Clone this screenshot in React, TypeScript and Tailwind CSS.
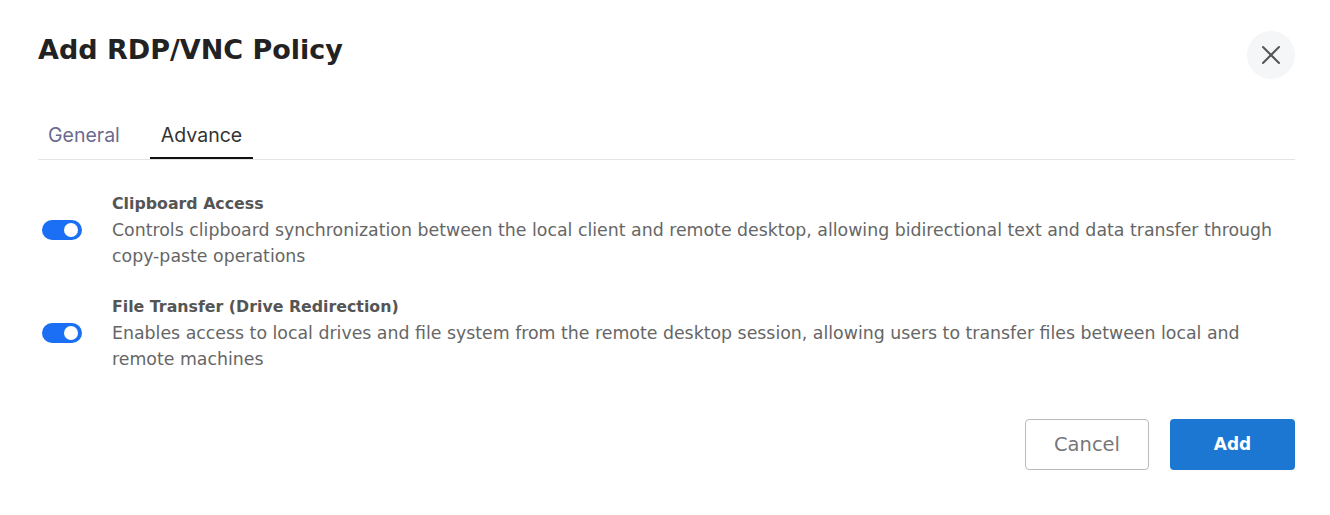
import { X } from 'lucide-react';

function Toggle() {
  return (
    <div className="flex h-5 w-10 shrink-0 items-center justify-end rounded-full bg-[#1a6ff5] px-[4px]">
      <div className="h-[14px] w-[14px] rounded-full bg-white" />
    </div>
  );
}

const options = [
  {
    title: 'Clipboard Access',
    text: 'Controls clipboard synchronization between the local client and remote desktop, allowing bidirectional text and data transfer through copy-paste operations',
  },
  {
    title: 'File Transfer (Drive Redirection)',
    text: 'Enables access to local drives and file system from the remote desktop session, allowing users to transfer files between local and remote machines',
  },
];

export default function App() {
  return (
    <div className="min-h-[515px] w-[1330px] bg-white pl-[38px] pr-[35px] pt-[20px] font-['DejaVu_Sans',sans-serif]">
      <div className="flex items-center justify-between">
        <h1 className="text-[27px] font-bold leading-[40px] text-[#222]">Add RDP/VNC Policy</h1>
        <button className="mt-[11px] flex h-12 w-12 items-center justify-center rounded-full bg-[#f5f6f8] text-[#555]">
          <X size={32} strokeWidth={1.5} />
        </button>
      </div>

      <div className="mt-[42px] flex border-b border-[#e4e4e7] font-['Inter',sans-serif] text-[19.5px]">
        <div className="px-[10px] pb-[9px] text-[#6c6a90]">General</div>
        <div className="ml-[20px] border-b-2 border-[#111] px-[11px] pb-[7px] text-[#333]">Advance</div>
      </div>

      <div className="mt-[31px] flex flex-col gap-[25px]">
        {options.map((o) => (
          <div key={o.title} className="flex">
            <div className="flex w-[74px] shrink-0 pl-[4px] pt-[29px]">
              <Toggle />
            </div>
            <div className="flex-1">
              <div className="text-[15.8px] font-bold leading-[26px] text-[#555]">{o.title}</div>
              <p className="text-[17.35px] leading-[26px] text-[#666]">{o.text}</p>
            </div>
          </div>
        ))}
      </div>

      <div className="mt-[47px] flex justify-end gap-[21px]">
        <button className="h-[51px] w-[124px] rounded-[4px] border border-[#bbb] text-[19.5px] text-[#777]">Cancel</button>
        <button className="h-[51px] w-[125px] rounded-[4px] bg-[#1b77d2] text-[17px] font-bold text-white">Add</button>
      </div>
    </div>
  );
}
